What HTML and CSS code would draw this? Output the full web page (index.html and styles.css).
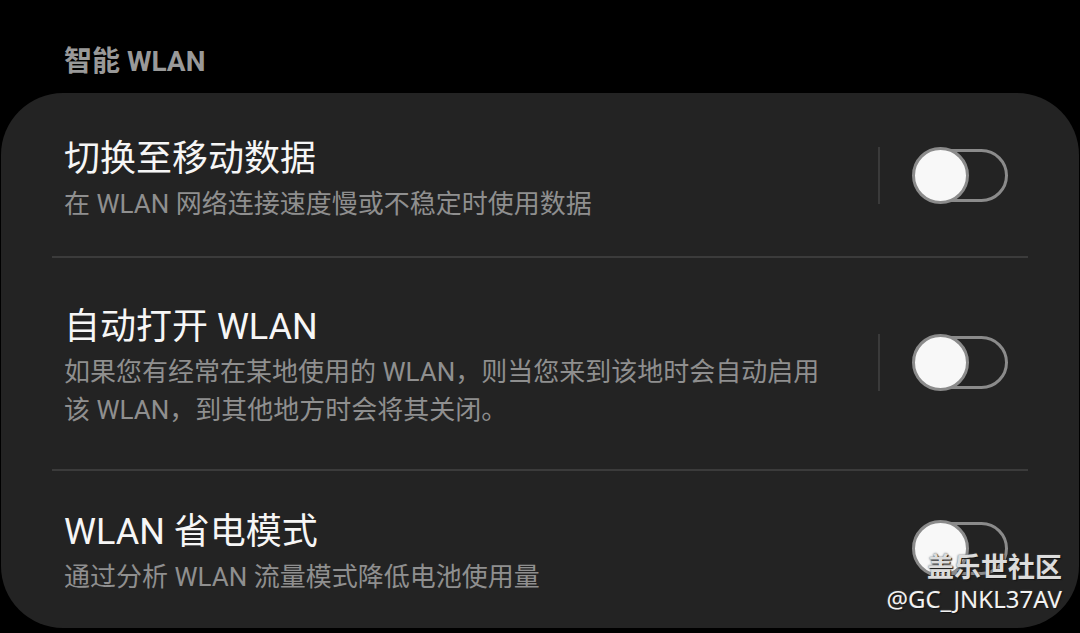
FILE: index.html
```html
<!doctype html>
<html lang="zh-CN">
<head>
	<meta charset="UTF-8">
	<title>智能 WLAN</title>
	<link rel="stylesheet" href="styles.css">
</head>
<body>
	<div class="page">
		<header class="head">智能 WLAN</header>

		<section class="card">
			<div class="row first">
				<div class="text">
					<p class="title">切换至移动数据</p>
					<p class="desc">在 WLAN 网络连接速度慢或不稳定时使用数据</p>
				</div>
				<div class="ctrl">
					<span class="bar"></span>
					<span class="switch"><span class="knob"></span></span>
				</div>
			</div>
			<div class="line"></div>

			<div class="row second">
				<div class="text">
					<p class="title">自动打开 WLAN</p>
					<p class="desc">如果您有经常在某地使用的 WLAN，则当您来到该地时会自动启用该 WLAN，到其他地方时会将其关闭。</p>
				</div>
				<div class="ctrl">
					<span class="bar"></span>
					<span class="switch"><span class="knob"></span></span>
				</div>
			</div>
			<div class="line"></div>

			<div class="row third">
				<div class="text">
					<p class="title">WLAN 省电模式</p>
					<p class="desc">通过分析 WLAN 流量模式降低电池使用量</p>
				</div>
				<div class="ctrl">
					<span class="bar blank"></span>
					<span class="switch"><span class="knob"></span></span>
				</div>
			</div>
		</section>

		<div class="mark">
			<p class="mark_name">盖乐世社区</p>
			<p class="mark_id">@GC_JNKL37AV</p>
		</div>
	</div>
</body>
</html>
```

FILE: styles.css
```css
*{
	padding: 0;
	margin: 0;
}
html,body{
	width: 100%;
	height: 100%;
	background: #000000;
}
body{
	font-family: Roboto, "Noto Sans CJK SC", sans-serif;
	overflow: hidden;
}

.page{
	position: relative;
	width: 1080px;
	height: 633px;
}

.head{
	height: 93px;
	box-sizing: border-box;
	padding: 43px 0 0 64px;
	font-size: 28px;
	line-height: 38px;
	font-weight: 700;
	color: #999999;
}

.card{
	background: #232323;
	border-radius: 62px;
	margin: 0 1px;
	padding: 0 51px;
	height: 535px;
	box-sizing: border-box;
}

.row{
	display: flex;
	align-items: center;
	padding: 0 20px 0 12px;
}
.first{
	padding-top: 44px;
	padding-bottom: 33px;
}
.second{
	padding-top: 47px;
	padding-bottom: 40px;
}
.third{
	padding-top: 39px;
	padding-bottom: 31px;
}

.text{
	flex: 1;
	padding-right: 44px;
}
.title{
	font-size: 36px;
	line-height: 44px;
	color: #f6f6f6;
}
.desc{
	margin-top: 4px;
	font-size: 26px;
	line-height: 38px;
	color: #8f8f8f;
}

.line{
	height: 2px;
	background: #3b3b3b;
}

.ctrl{
	display: flex;
	align-items: center;
	gap: 32px;
	margin-bottom: 9px;
}
.bar{
	width: 2px;
	height: 57px;
	background: #3a3a3a;
}
.bar.blank{
	background: transparent;
}
.switch{
	position: relative;
	width: 96px;
	height: 57px;
}
.switch::before{
	content: "";
	position: absolute;
	left: 3px;
	right: 0;
	top: 2px;
	bottom: 2px;
	border: 3px solid #8b8b8b;
	border-radius: 27px;
}
.knob{
	position: absolute;
	left: 0;
	top: 0;
	width: 51px;
	height: 51px;
	border: 3px solid #8b8b8b;
	border-radius: 50%;
	background: #f8f8f8;
}

.mark{
	position: absolute;
	right: 18px;
	bottom: 20px;
	text-align: right;
	color: #f2f2f2;
	text-shadow: 1px 1px 1px #111, 0 0 2px #555;
}
.mark_name{
	font-family: "Noto Sans CJK SC", sans-serif;
	font-weight: 700;
	font-size: 27px;
	line-height: 38px;
	color: #dcdcdc;
}
.mark_id{
	font-family: "Noto Sans", sans-serif;
	font-size: 24px;
	line-height: 28px;
}
```
